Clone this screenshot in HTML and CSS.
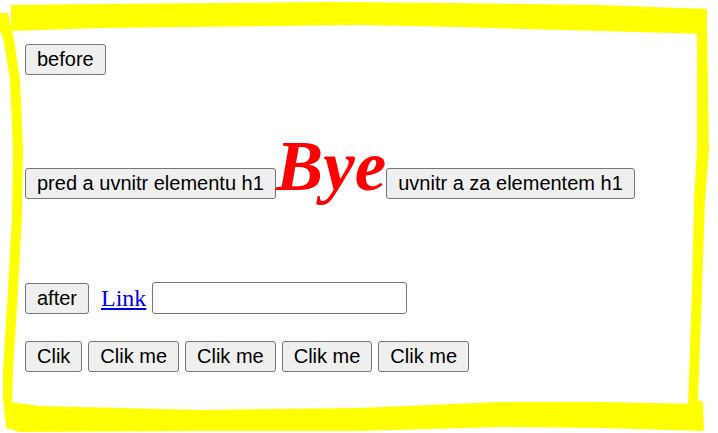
FILE: index.html
```html
<!DOCTYPE html>
<html lang="cs">
<head>
<meta charset="utf-8">
<title>Bye</title>
<link rel="stylesheet" href="styles.css">
</head>
<body>
<div class="page">
  <svg class="frame" width="718" height="433" viewBox="0 0 718 433" aria-hidden="true">
    <polygon points="11,5 100,4 330,2 450,3 600,5 707,9 707,34 600,31 458,27 358,25 100,28 11,31"/>
    <polygon points="697,30 707,30 709,150 705,200 702,290 698,400 703,402 703,405 688,405 692,290 694,200 697,150"/>
    <polygon points="3,398 10,402 40,406 200,410 358,408 500,402 600,402 703,404 704,431 600,428 500,427 358,431 200,431 20,432 6,428"/>
    <polygon points="0,13 8,13 14,40 20,80 23,150 22,215 18,290 13,370 12,402 3,402 3,370 8,290 12,215 13,150 10,80 4,42 0,30"/>
  </svg>
  <div class="content">
    <div class="row row-before">
      <button class="btn">before</button>
    </div>
    <div class="row row-heading">
      <button class="btn">pred a uvnitr elementu h1</button><h1 class="title">Bye</h1><button class="btn">uvnitr a za elementem h1</button>
    </div>
    <div class="row row-after">
      <button class="btn">after</button>
      <a class="link" href="#">Link</a>
      <input class="field" type="text">
    </div>
    <div class="row row-clicks">
      <button class="btn">Clik</button>
      <button class="btn">Clik me</button>
      <button class="btn">Clik me</button>
      <button class="btn">Clik me</button>
      <button class="btn">Clik me</button>
    </div>
  </div>
</div>
</body>
</html>
```

FILE: styles.css
```css
html, body {
  margin: 0;
  padding: 0;
  background: #ffffff;
}

.page {
  position: relative;
  width: 718px;
  height: 433px;
  overflow: hidden;
  font-family: "Liberation Serif", "Times New Roman", serif;
}

.frame {
  position: absolute;
  left: 0;
  top: 0;
  fill: #ffff00;
}

.content {
  position: relative;
  display: flex;
  flex-direction: column;
  align-items: flex-start;
  padding: 44px 0 0 25px;
}

.row {
  display: flex;
}

.btn {
  font-family: "Liberation Sans", Arial, sans-serif;
  font-size: 20px;
  line-height: 23px;
  color: #000000;
  background: #efefef;
  border: 1px solid #767676;
  border-radius: 3px;
  padding: 3px 11px;
  margin: 0;
  white-space: nowrap;
}

.row-heading {
  align-items: baseline;
  margin-top: 51px;
}

.title {
  margin: 0;
  font-family: "Liberation Serif", "Times New Roman", serif;
  font-size: 71px;
  font-weight: bold;
  font-style: italic;
  line-height: normal;
  color: #ff0000;
}

.row-after {
  align-items: center;
  margin-top: 75px;
}

.link {
  margin-left: 12px;
  font-family: "Liberation Serif", "Times New Roman", serif;
  font-size: 24px;
  line-height: normal;
  color: #0000ee;
  text-decoration: underline;
}

.field {
  box-sizing: border-box;
  margin: 0 0 0 6px;
  width: 255px;
  height: 32px;
  border: 1px solid #767676;
  border-radius: 3px;
  background: #ffffff;
  font-size: 20px;
}

.row-clicks {
  gap: 6px;
  margin-top: 27px;
}
```
